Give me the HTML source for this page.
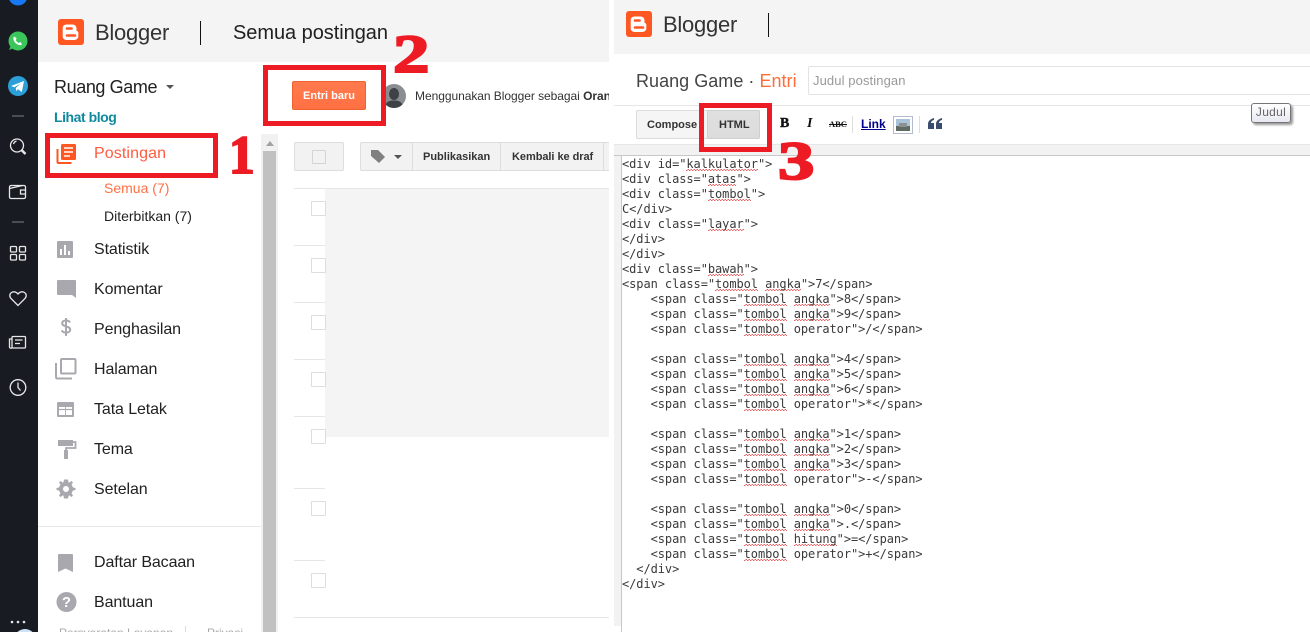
<!DOCTYPE html>
<html lang="id"><head><meta charset="utf-8"><title>Blogger</title>
<style>
html,body{margin:0;padding:0;background:#fff}
#p{position:relative;width:1310px;height:632px;overflow:hidden;background:#fff;font-family:"Liberation Sans",sans-serif;color:#212121}
#p div,#p span.t,#p svg{position:absolute}
.t{white-space:nowrap;line-height:20px;height:20px}
.nav{left:94px;font-size:16px;letter-spacing:-.1px;margin-top:1px}
.box{border:5px solid #ed1c24;box-sizing:border-box}
.num{font-family:"Liberation Serif",serif;font-weight:bold;color:#ed1c24;-webkit-text-stroke:2px #ed1c24;line-height:50px;white-space:nowrap;transform-origin:0 50%}
.ln{background:#e6e6e6;height:1px}
.cb{width:13px;height:13px;border:1px solid #ddd;border-radius:1px;background:#fff}
#code{left:622px;top:157px;font:12px/15px "DejaVu Sans Mono","Liberation Mono",monospace;letter-spacing:-.07px;color:#3a3a3a;white-space:pre}
#code u{text-decoration:none;background:repeating-linear-gradient(90deg,#e86060 0 1.5px,transparent 1.5px 3px) 0 100%/100% 1px no-repeat,repeating-linear-gradient(90deg,transparent 0 1.5px,#e86060 1.5px 3px) 0 calc(100% - 1px)/100% 1px no-repeat}
</style></head><body><div id="p">

<!-- dark rail -->
<div style="left:0;top:0;width:38px;height:632px;background:#181c22"></div>
<svg style="left:0;top:0" width="38" height="632" viewBox="0 0 38 632" fill="none">
<circle cx="18" cy="-4" r="9.500" fill="#1877f2"/>
<circle cx="18" cy="41" r="9.500" fill="#3bc55b"/><path d="M9 50l2-5 3 3z" fill="#3bc55b"/>
<path d="M14 36.500c-1.500 2 0 5 1.500 6.500s4.500 3 6.500 1.500l-1.500-2.500-1.800 1c-1-.5-2.500-2-3-3l1-1.800z" fill="#fff"/>
<circle cx="18" cy="86" r="10" fill="#2c9fd8"/><path d="M11 86l13-5-2.200 11-3.800-2.800-1.800 1.900-.4-3.200 5-4.500-6.500 3.800z" fill="#fff"/>
<path d="M12 116h12M12 222h12" stroke="#7c8086"/>
<g stroke="#e8e8e8" stroke-width="1.300">
<circle cx="17" cy="145.500" r="6.500"/><path d="M21.500 150l4 4" stroke-width="2.500"/>
<path d="M13.500 144c.5-1.500 1.500-2.500 3-3"/>
<rect x="9.500" y="185.500" width="16" height="13" rx="1.500"/><path d="M9.500 188.500l13-3M25.500 190h-5v4h5"/>
<rect x="10.500" y="246.500" width="6" height="5.500" rx="1"/><rect x="19.500" y="246.500" width="6" height="5.500" rx="1"/><rect x="10.500" y="254.500" width="6" height="5.500" rx="1"/><rect x="19.500" y="254.500" width="6" height="5.500" rx="1"/>
<path d="M18 305.500l-7-7c-4-5 3-9.500 7-4.500 4-5 11-.5 7 4.500z"/>
<rect x="12" y="336.500" width="13.500" height="11.500" rx="1"/><path d="M12 339h-2.500v8c0 1 1 1.500 2.500 1M15 340h7.500M15 343.500h5"/>
<circle cx="18" cy="387.500" r="7.800"/><path d="M18 382.500v5l2.500 3"/>
</g>
<g fill="#e8e8e8"><circle cx="12" cy="622" r="1.300"/><circle cx="18" cy="622" r="1.300"/><circle cx="24" cy="622" r="1.300"/></g>
<circle cx="25" cy="640" r="11" fill="#cfe3f4"/>
</svg>

<!-- left header -->
<div style="left:38px;top:0;width:571px;height:62px;background:#f4f4f4"></div>
<svg style="left:58px;top:19px" width="26" height="26" viewBox="0 0 26 26"><rect width="26" height="26" rx="3" fill="#ff5722"/><path d="M8.500 5.500h6c2.500 0 4 1.800 4 4v1.500c0 .8.500 1 1 1.300.6.300.8.800.8 1.500v3.500c0 2.200-1.700 3.700-4 3.700h-7.800c-2.200 0-3.800-1.600-3.800-3.700v-8.300c0-2 1.700-3.500 3.800-3.500z" fill="#fff"/><path d="M9 9.500h4.500M9 16.500h8" stroke="#ff5722" stroke-width="2.600" stroke-linecap="round"/></svg>
<span class="t" style="position:absolute;left:95px;top:23px;font-size:22px;letter-spacing:-.25px;color:#333">Blogger</span>
<div style="left:200px;top:21px;width:1px;height:24px;background:#111"></div>
<span class="t" style="position:absolute;left:233px;top:23px;font-size:20px;letter-spacing:-.05px;color:#212121">Semua postingan</span>

<!-- sidebar -->
<span class="t" style="position:absolute;left:54px;top:77px;font-size:18px;letter-spacing:-.4px">Ruang Game</span>
<svg style="left:166px;top:84px" width="9" height="6"><path d="M0 1h8l-4 4z" fill="#555"/></svg>
<span class="t" style="position:absolute;left:54px;top:107px;font-size:14px;font-weight:bold;letter-spacing:-.45px;color:#0f8a9f">Lihat blog</span>
<svg style="left:55px;top:143px" width="22" height="22" viewBox="0 0 22 22" fill="#ff5722"><rect x="6" y="1" width="15" height="16" rx="1.500"/><path d="M9 5h9M9 9h9M9 13h6" stroke="#fff" stroke-width="1.500"/><path d="M2.500 6v13c0 .5.300 1 1 1h13" fill="none" stroke="#ff5722" stroke-width="2"/></svg>
<span class="t nav" style="position:absolute;top:143px;letter-spacing:.1px;color:#ff5b40">Postingan</span>
<span class="t" style="position:absolute;left:104px;top:178px;font-size:14px;color:#ff7043">Semua (7)</span>
<span class="t" style="position:absolute;left:104px;top:206px;font-size:14px;color:#212121">Diterbitkan (7)</span>
<span class="t nav" style="position:absolute;top:239px">Statistik</span>
<span class="t nav" style="position:absolute;top:279px">Komentar</span>
<span class="t nav" style="position:absolute;top:319px">Penghasilan</span>
<span class="t nav" style="position:absolute;top:359px">Halaman</span>
<span class="t nav" style="position:absolute;top:399px">Tata Letak</span>
<span class="t nav" style="position:absolute;top:439px">Tema</span>
<span class="t nav" style="position:absolute;top:479px">Setelan</span>
<span class="t nav" style="position:absolute;top:552px">Daftar Bacaan</span>
<span class="t nav" style="position:absolute;top:592px">Bantuan</span>
<div style="left:38px;top:526px;width:223px;height:1px;background:#e8e8e8"></div>
<span class="t" style="position:absolute;left:59px;top:623px;font-size:12px;color:#aaa">Persyaratan Layanan</span>
<div style="left:185px;top:626px;width:1px;height:6px;background:#ddd"></div>
<span class="t" style="position:absolute;left:207px;top:623px;font-size:12px;color:#aaa">Privasi</span>
<svg style="left:54px;top:238px" width="24" height="270" viewBox="0 0 24 270" fill="#a8a8ae">
<path d="M4 3h14a1 1 0 0 1 1 1v15a1 1 0 0 1-1 1H4a1 1 0 0 1-1-1V4a1 1 0 0 1 1-1z"/><path d="M7 11v6M11 7v10M15 13v4" stroke="#fff" stroke-width="2"/>
<path d="M3 43a1 1 0 0 1 1-1h17a1 1 0 0 1 1 1v17l-4-3H4a1 1 0 0 1-1-1z"/>
<path d="M16 84.500c-.8-1.500-2.200-2-4-2-2.200 0-3.800 1-3.800 2.800 0 4 8 2.300 8 6.300 0 1.900-1.800 3-4.200 3-2 0-3.500-.7-4.300-2.300M12 80v18" fill="none" stroke="#a8a8ae" stroke-width="2"/>
<rect x="7" y="121" width="14.500" height="14.500" rx="1" fill="none" stroke="#a8a8ae" stroke-width="2"/><path d="M2 125v14c0 1 .5 1.500 1.500 1.500h14.500" fill="none" stroke="#a8a8ae" stroke-width="2"/>
<path d="M4 164h15a1 1 0 0 1 1 1v13a1 1 0 0 1-1 1H4a1 1 0 0 1-1-1v-13a1 1 0 0 1 1-1z"/><path d="M5 169h13v8H5z" fill="#fff"/><path d="M11.500 169v8" stroke="#c4a8c4" stroke-width="1"/><path d="M5 171.500h13" stroke="#a8a8ae" stroke-width="1.200"/>
<path d="M4 202h15v6H4z"/><path d="M19 204h2.500v6H12v3" fill="none" stroke="#a8a8ae" stroke-width="1.800"/><rect x="10" y="212" width="4" height="9"/>
<circle cx="12" cy="251" r="7"/><path d="M12 241.500l2 0 .6 3h-5.200l.6-3zM12 260.500l2 0 .6-3h-5.200l.6 3zM2.500 251v-1l3-.6v3.200l-3-.6zM21.500 251v-1l-3-.6v3.200l3-.6zM5 244.500l1.500-1.500 3 2-2.500 2.500zM19 244.500l-1.500-1.500-3 2 2.500 2.500zM5 257.500l1.500 1.500 3-2-2.500-2.500zM19 257.500l-1.500 1.500-3-2 2.500-2.500z"/><circle cx="12" cy="251" r="3" fill="#fff"/>
</svg>
<svg style="left:55px;top:552px" width="24" height="62" viewBox="0 0 24 62" fill="#a8a8ae">
<path d="M4 2h13a1 1 0 0 1 1 1v17l-7.500-3.500L3 20V3a1 1 0 0 1 1-1z"/>
<circle cx="11.500" cy="50" r="10"/><text x="11.500" y="55" font-family="Liberation Sans" font-size="15" font-weight="bold" fill="#fff" text-anchor="middle">?</text>
</svg>

<!-- scrollbar -->
<div style="left:261px;top:134px;width:17px;height:498px;background:#f1f1f1"></div>
<div style="left:263px;top:151px;width:13px;height:481px;background:#c1c1c1"></div>
<svg style="left:266px;top:141px" width="8" height="5"><path d="M0 5h8L4 0z" fill="#a3a3a3"/></svg>

<!-- post list -->
<div style="left:292px;top:81px;width:74px;height:29px;box-sizing:border-box;border:1px solid #ee6231;border-radius:2px;background:linear-gradient(#ff7a4d,#ff7043);color:#fff;font-size:11px;font-weight:bold;text-align:center;line-height:28px">Entri baru</div>
<svg style="left:382px;top:84px" width="24" height="24" viewBox="0 0 24 24"><defs><clipPath id="c"><circle cx="12" cy="12" r="12"/></clipPath></defs><circle cx="12" cy="12" r="12" fill="#8a8d92"/><g clip-path="url(#c)" fill="#3e4146"><ellipse cx="12" cy="10" rx="5" ry="6"/><path d="M3 24c0-6 4-7.500 9-7.500s9 1.500 9 7.500z"/></g></svg>
<div class="t" style="left:415px;top:86px;width:194px;overflow:hidden;font-size:12px;letter-spacing:-.05px;color:#333">Menggunakan Blogger sebagai <b>Oran</b></div>

<div style="left:294px;top:142px;width:50px;height:29px;box-sizing:border-box;background:#f2f2f2;border:1px solid #ddd;border-radius:2px"></div>
<div style="left:312px;top:150px;width:14px;height:14px;box-sizing:border-box;border:1px solid #d4d4d4;border-radius:1px"></div>
<div style="left:360px;top:142px;width:249px;height:29px;box-sizing:border-box;background:#f2f2f2;border:1px solid #ddd;border-right:0;border-radius:2px 0 0 2px"></div>
<svg style="left:370px;top:149px" width="36" height="15" viewBox="0 0 36 15" fill="#808080"><path d="M1 1h7l7 7-6 6-8-7z"/><path d="M24 6h8l-4 4z" fill="#555"/></svg>
<div style="left:412px;top:142px;width:1px;height:29px;background:#ddd"></div>
<div style="left:500px;top:142px;width:1px;height:29px;background:#ddd"></div>
<div style="left:603px;top:142px;width:1px;height:29px;background:#ddd"></div>
<span class="t" style="position:absolute;left:423px;top:147px;font-size:11px;font-weight:bold;color:#333">Publikasikan</span>
<span class="t" style="position:absolute;left:512px;top:147px;font-size:11px;font-weight:bold;letter-spacing:-.05px;color:#333">Kembali ke draf</span>

<div class="ln" style="left:294px;top:188px;width:315px"></div>
<div style="left:325px;top:189px;width:284px;height:248px;background:#f4f4f4"></div>
<div class="ln" style="left:294px;top:245px;width:31px"></div>
<div class="ln" style="left:294px;top:302px;width:31px"></div>
<div class="ln" style="left:294px;top:359px;width:31px"></div>
<div class="ln" style="left:294px;top:416px;width:31px"></div>
<div class="ln" style="left:294px;top:488px;width:31px"></div>
<div class="ln" style="left:294px;top:560px;width:31px"></div>
<div class="ln" style="left:294px;top:617px;width:315px"></div>
<div class="cb" style="left:311px;top:201px"></div>
<div class="cb" style="left:311px;top:258px"></div>
<div class="cb" style="left:311px;top:315px"></div>
<div class="cb" style="left:311px;top:372px"></div>
<div class="cb" style="left:311px;top:429px"></div>
<div class="cb" style="left:311px;top:501px"></div>
<div class="cb" style="left:311px;top:573px"></div>

<!-- right panel -->
<div style="left:614px;top:0;width:696px;height:54px;background:#f4f4f4"></div>
<svg style="left:626px;top:11px" width="26" height="26" viewBox="0 0 26 26"><rect width="26" height="26" rx="3" fill="#ff5722"/><path d="M8.500 5.500h6c2.500 0 4 1.800 4 4v1.500c0 .8.500 1 1 1.300.6.300.8.800.8 1.500v3.500c0 2.200-1.700 3.700-4 3.700h-7.800c-2.200 0-3.800-1.600-3.800-3.700v-8.300c0-2 1.700-3.500 3.800-3.500z" fill="#fff"/><path d="M9 9.500h4.500M9 16.500h8" stroke="#ff5722" stroke-width="2.600" stroke-linecap="round"/></svg>
<span class="t" style="position:absolute;left:663px;top:15px;font-size:22px;letter-spacing:-.25px;color:#333">Blogger</span>
<div style="left:768px;top:13px;width:1px;height:24px;background:#111"></div>

<span class="t" style="position:absolute;left:636px;top:71px;font-size:18px;letter-spacing:.03px;color:#444">Ruang Game · <span style="color:#ff6d3a">Entri</span></span>
<div style="left:808px;top:66px;width:510px;height:29px;box-sizing:border-box;border:1px solid #e3e3e3;border-radius:2px"></div>
<span class="t" style="position:absolute;left:813px;top:71px;font-size:13px;letter-spacing:.1px;color:#999">Judul postingan</span>
<div class="ln" style="left:614px;top:105px;width:696px"></div>

<div style="left:636px;top:110px;width:124px;height:29px;box-sizing:border-box;background:#f5f5f5;border:1px solid #dcdcdc;border-radius:2px"></div>
<div style="left:707px;top:110px;width:53px;height:29px;box-sizing:border-box;background:linear-gradient(#e0e0e0,#dcdcdc);border:1px solid #cfcfcf;border-radius:2px"></div>
<span class="t" style="position:absolute;left:647px;top:115px;font-size:11px;font-weight:bold;color:#333">Compose</span>
<span class="t" style="position:absolute;left:719px;top:115px;font-size:11px;font-weight:bold;color:#333">HTML</span>
<span class="t" style="position:absolute;left:780px;top:114px;font:bold 14px/20px 'Liberation Serif',serif;color:#111;-webkit-text-stroke:.4px #111">B</span>
<span class="t" style="position:absolute;left:807px;top:114px;font:italic bold 14px/20px 'Liberation Serif',serif;color:#111">I</span>
<span class="t" style="position:absolute;left:829px;top:114px;font:bold 8.500px/20px 'Liberation Serif',serif;color:#111;text-decoration:line-through">ABC</span>
<div style="left:852px;top:116px;width:1px;height:17px;background:#ddd"></div>
<span class="t" style="position:absolute;left:861px;top:114px;font-size:12px;font-weight:bold;color:#00008b;text-decoration:underline">Link</span>
<svg style="left:893px;top:116px" width="20" height="18" viewBox="0 0 20 18"><rect x=".5" y=".5" width="19" height="17" fill="#fff" stroke="#b4bccb"/><rect x="3" y="3" width="14" height="12" fill="#a9c3d8"/><path d="M3 10h14v5H3z" fill="#5f6b62"/><path d="M6 7h8v4H6z" fill="#8d9090"/></svg>
<div style="left:919px;top:116px;width:1px;height:17px;background:#ddd"></div>
<svg style="left:928px;top:118px" width="14" height="11" viewBox="0 0 14 11" fill="#3a4d70"><path d="M6 0C2.500 1 0 3 0 6v5h6V5H3c0-1.500 1.500-2.800 3-3zM14 0c-3.500 1-6 3-6 6v5h6V5h-3c0-1.500 1.500-2.800 3-3z"/></svg>
<div style="left:614px;top:144px;width:696px;height:11px;background:#f2f2f2;border-top:1px solid #e6e6e6;box-sizing:border-box"></div>
<div style="left:614px;top:155px;width:696px;height:1px;background:#c8c8c8"></div>
<div style="left:614px;top:156px;width:7px;height:470px;background:#f2f2f2"></div>
<div style="left:621px;top:155px;width:1px;height:477px;background:#c8c8c8"></div>

<div id="code">&lt;div id="<u>kalkulator</u>"&gt;
&lt;div class="<u>atas</u>"&gt;
&lt;div class="<u>tombol</u>"&gt;
C&lt;/div&gt;
&lt;div class="<u>layar</u>"&gt;
&lt;/div&gt;
&lt;/div&gt;
&lt;div class="<u>bawah</u>"&gt;
&lt;span class="<u>tombol</u> <u>angka</u>"&gt;7&lt;/span&gt;
    &lt;span class="<u>tombol</u> <u>angka</u>"&gt;8&lt;/span&gt;
    &lt;span class="<u>tombol</u> <u>angka</u>"&gt;9&lt;/span&gt;
    &lt;span class="<u>tombol</u> operator"&gt;/&lt;/span&gt;

    &lt;span class="<u>tombol</u> <u>angka</u>"&gt;4&lt;/span&gt;
    &lt;span class="<u>tombol</u> <u>angka</u>"&gt;5&lt;/span&gt;
    &lt;span class="<u>tombol</u> <u>angka</u>"&gt;6&lt;/span&gt;
    &lt;span class="<u>tombol</u> operator"&gt;*&lt;/span&gt;

    &lt;span class="<u>tombol</u> <u>angka</u>"&gt;1&lt;/span&gt;
    &lt;span class="<u>tombol</u> <u>angka</u>"&gt;2&lt;/span&gt;
    &lt;span class="<u>tombol</u> <u>angka</u>"&gt;3&lt;/span&gt;
    &lt;span class="<u>tombol</u> operator"&gt;-&lt;/span&gt;

    &lt;span class="<u>tombol</u> <u>angka</u>"&gt;0&lt;/span&gt;
    &lt;span class="<u>tombol</u> <u>angka</u>"&gt;.&lt;/span&gt;
    &lt;span class="<u>tombol</u> <u>hitung</u>"&gt;=&lt;/span&gt;
    &lt;span class="<u>tombol</u> operator"&gt;+&lt;/span&gt;
  &lt;/div&gt;
&lt;/div&gt;</div>

<div style="left:1251px;top:103px;width:40px;height:20px;box-sizing:border-box;border:1px solid #767676;border-radius:3px;background:linear-gradient(#fff,#e8e8f2);box-shadow:2px 2px 2px #999;font-size:12px;line-height:17px;text-align:center;color:#666;letter-spacing:.3px">Judul</div>

<!-- annotations -->
<div class="box" style="left:45px;top:133px;width:173px;height:45px"></div>
<div class="box" style="left:263px;top:65px;width:123px;height:61px"></div>
<div class="box" style="left:699px;top:103px;width:73px;height:49px"></div>
<div class="num" style="left:229px;top:130px;font-size:54px;transform:scaleX(.95)">1</div>
<div class="num" style="left:393px;top:29px;font-size:54px;transform:scaleX(1.35)">2</div>
<div class="num" style="left:778px;top:136px;font-size:54px;transform:scaleX(1.35)">3</div>

</div></body></html>
